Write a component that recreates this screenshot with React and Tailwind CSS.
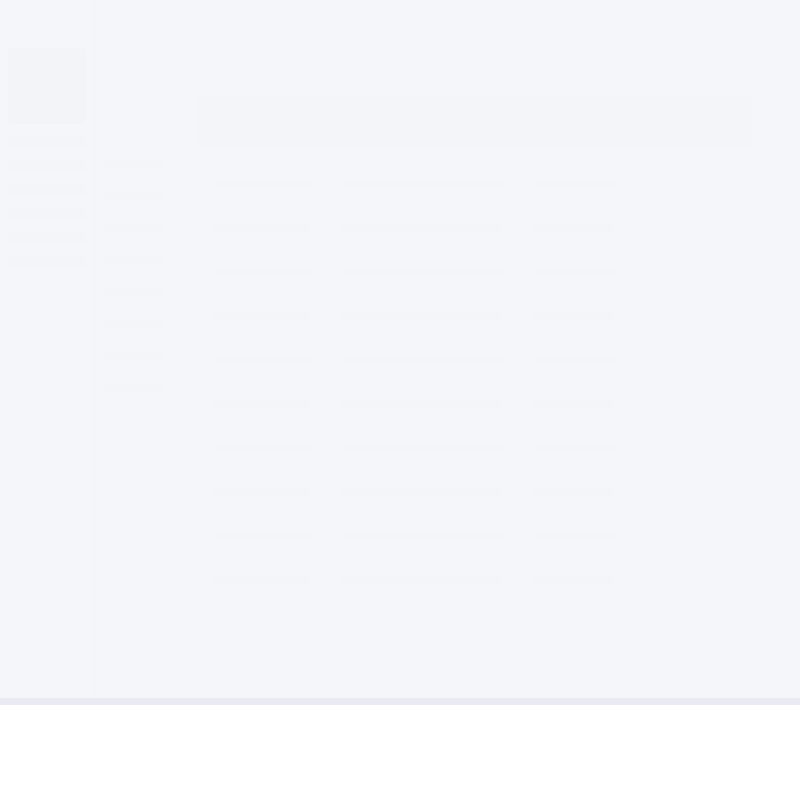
import React from 'react';

// Faint skeleton rows shown behind the wash
const rows = [0, 1, 2, 3, 4, 5, 6, 7, 8, 9];

export default function App() {
  return (
    <div className="w-full h-[800px] flex flex-col bg-white" style={{ fontFamily: 'Inter, "Liberation Sans", sans-serif' }}>
      <div className="h-[698px] flex bg-[#f5f6fa] overflow-hidden">
        {/* sidebar */}
        <div className="w-[95px] flex flex-col gap-3 pt-12 px-2 bg-[#f5f6fa] border-r border-[#f3f4f8]">
          <div className="h-[76px] rounded bg-[#f3f4f8]" />
          {rows.slice(0, 6).map((r) => (
            <div key={r} className="h-3 rounded bg-[#f4f5f9]" />
          ))}
        </div>
        {/* secondary column */}
        <div className="w-[95px] flex flex-col gap-6 pt-40 px-2 border-r border-[#f4f5f9]">
          {rows.slice(0, 8).map((r) => (
            <div key={r} className="h-2 w-3/4 rounded bg-[#f4f5f9]" />
          ))}
        </div>
        {/* main */}
        <div className="flex-1 flex flex-col pt-24 pr-12 pl-2">
          <div className="h-[50px] rounded bg-[#f4f5f9]" />
          <div className="flex flex-col mt-4">
            {rows.map((r) => (
              <div key={r} className="h-[44px] flex items-center gap-8 px-4">
                <div className="h-2 w-24 rounded bg-[#f4f5f9]" />
                <div className="h-2 w-40 rounded bg-[#f4f5f9]" />
                <div className="h-2 w-20 rounded bg-[#f4f5f9]" />
              </div>
            ))}
          </div>
        </div>
      </div>
      <div className="h-[7px] bg-[#e9ebf3]" />
      <div className="flex-1 bg-white" />
    </div>
  );
}
